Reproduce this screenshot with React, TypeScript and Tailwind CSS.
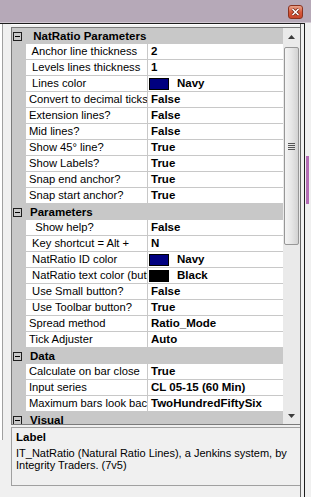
type Row =
  | { kind: "cat"; label: string }
  | { kind: "prop"; name: string; value: string; swatch?: string };

const rows: Row[] = [
  { kind: "cat", label: " NatRatio Parameters" },
  { kind: "prop", name: " Anchor line thickness", value: "2" },
  { kind: "prop", name: " Levels lines thickness", value: "1" },
  { kind: "prop", name: " Lines color", value: "Navy", swatch: "#000080" },
  { kind: "prop", name: "Convert to decimal ticks", value: "False" },
  { kind: "prop", name: "Extension lines?", value: "False" },
  { kind: "prop", name: "Mid lines?", value: "False" },
  { kind: "prop", name: "Show 45° line?", value: "True" },
  { kind: "prop", name: "Show Labels?", value: "True" },
  { kind: "prop", name: "Snap end anchor?", value: "True" },
  { kind: "prop", name: "Snap start anchor?", value: "True" },
  { kind: "cat", label: "Parameters" },
  { kind: "prop", name: "  Show help?", value: "False" },
  { kind: "prop", name: " Key shortcut = Alt +", value: "N" },
  { kind: "prop", name: " NatRatio ID color", value: "Navy", swatch: "#000080" },
  { kind: "prop", name: " NatRatio text color (button)", value: "Black", swatch: "#000000" },
  { kind: "prop", name: " Use Small button?", value: "False" },
  { kind: "prop", name: " Use Toolbar button?", value: "True" },
  { kind: "prop", name: "Spread method", value: "Ratio_Mode" },
  { kind: "prop", name: "Tick Adjuster", value: "Auto" },
  { kind: "cat", label: "Data" },
  { kind: "prop", name: "Calculate on bar close", value: "True" },
  { kind: "prop", name: "Input series", value: "CL 05-15 (60 Min)" },
  { kind: "prop", name: "Maximum bars look back", value: "TwoHundredFiftySix" },
  { kind: "cat", label: "Visual" },
];

export default function App() {
  return (
    <div className="w-[311px] h-[497px] overflow-hidden bg-[#f0f0f0] flex flex-col font-['Liberation_Sans',Arial,sans-serif] text-black">
      {/* title bar */}
      <div className="h-[23px] shrink-0 bg-[#b6a9b8] border-b border-[#d2c9d3] flex justify-end items-start pt-[5px] pr-[8px]">
        <CloseButton />
      </div>

      <div className="flex flex-1 min-h-0">
        <div className="w-[305px] border-t border-r border-[#1c1c1c] flex">
          {/* strip of the window behind */}
          <div className="w-[11px] flex flex-col">
            <div className="h-[416px] flex">
              <div className="w-[2px] bg-white" />
              <div className="w-px bg-[#a0a0a0]" />
              <div className="flex-1 bg-[#f0f0f0]" />
            </div>
          </div>

          <div className="w-[290px] border-r border-[#646464] flex flex-col">
            <div className="h-[3px] border-t border-white" />
            <div className="h-[398px] border-l border-t border-b border-[#7a7a7a] flex">
              <div className="w-[271px] overflow-hidden flex flex-col">
                {rows.map((r, i) =>
                  r.kind === "cat" ? <CategoryRow key={i} label={r.label} /> : <PropRow key={i} {...r} />
                )}
              </div>
              <ScrollBar />
            </div>
            <div className="h-[2px]" />
            <div className="h-[59px] border-l border-t border-b border-[#a0a0a0] pl-[4px] pt-[2px]">
              <p className="text-[11.5px] leading-[14px] font-bold">Label</p>
              <p className="mt-[3px] text-[11px] leading-[12px]">
                IT_NatRatio (Natural Ratio Lines), a Jenkins system, by
                <br />
                Integrity Traders. (7v5)
              </p>
            </div>
          </div>
          <div className="w-[3px]" />
        </div>

        <div className="flex-1 bg-[#f0f0f0] flex">
          <div className="ml-[1px] mt-[133px] w-[3px] h-[48px] bg-[#b46cb6]" />
        </div>
      </div>
    </div>
  );
}

function CategoryRow({ label }: { label: string }) {
  return (
    <div className="h-[16px] shrink-0 bg-[#c8c8c8] flex items-center">
      <div className="w-[18px] pl-px flex items-center">
        <svg width="9" height="9" viewBox="0 0 9 9">
          <rect x="0.5" y="0.5" width="8" height="8" fill="none" stroke="#1e1e1e" />
          <line x1="2" y1="4.5" x2="7" y2="4.5" stroke="#000" />
        </svg>
      </div>
      <span className="whitespace-pre text-[11.5px] leading-[15px] font-bold">{label}</span>
    </div>
  );
}

function PropRow({ name, value, swatch }: { name: string; value: string; swatch?: string }) {
  return (
    <div className="h-[16px] shrink-0 flex">
      <div className="w-[14px] bg-[#c8c8c8]" />
      <div className="w-[121px] bg-white border-b border-[#c8c8c8] pl-[3px] overflow-hidden whitespace-pre text-[11.2px] leading-[15px]">
        {name}
      </div>
      <div className="w-px bg-[#c8c8c8]" />
      {swatch ? (
        <div className="w-[135px] bg-white border-b border-[#c8c8c8] pl-px flex items-start overflow-hidden">
          <div className="mt-[2px] w-[20px] h-[12px] border border-black" style={{ backgroundColor: swatch }} />
          <span className="ml-[8px] text-[11.5px] leading-[15px] font-bold">{value}</span>
        </div>
      ) : (
        <div className="w-[135px] bg-white border-b border-[#c8c8c8] pl-[3px] overflow-hidden whitespace-nowrap text-[11.5px] leading-[15px] font-bold">
          {value}
        </div>
      )}
    </div>
  );
}

function ScrollBar() {
  return (
    <div className="w-[17px] bg-[#eaeaea] flex flex-col">
      <div className="h-[17px] flex items-center justify-center">
        <svg width="7" height="4" viewBox="0 0 7 4">
          <path d="M0 4 L3.5 0 L7 4 Z" fill="#3c3c3c" />
        </svg>
      </div>
      <div className="flex-1">
        <div className="mx-px mt-[2px] h-[198px] rounded-[2px] border border-[#979797] bg-linear-to-r from-[#f4f4f4] via-[#e6e6e6] to-[#d2d2d2] flex items-center justify-center">
          <div className="flex flex-col gap-px">
            <div className="w-[7px] h-px bg-[#555]" />
            <div className="w-[7px] h-px bg-[#555]" />
            <div className="w-[7px] h-px bg-[#555]" />
            <div className="w-[7px] h-px bg-[#555]" />
          </div>
        </div>
      </div>
      <div className="h-[17px] flex items-center justify-center">
        <svg width="7" height="4" viewBox="0 0 7 4">
          <path d="M0 0 L3.5 4 L7 0 Z" fill="#3c3c3c" />
        </svg>
      </div>
    </div>
  );
}

function CloseButton() {
  return (
    <div className="w-[15px] h-[14px] rounded-[3px] border border-[#8a3320] bg-linear-to-b from-[#e8a48c] via-[#d8583a] to-[#c7452a] flex items-center justify-center">
      <svg width="9" height="8" viewBox="0 0 9 8">
        <path d="M1.5 1 L7.5 7 M7.5 1 L1.5 7" stroke="#6a2010" strokeWidth="3" />
        <path d="M1.5 1 L7.5 7 M7.5 1 L1.5 7" stroke="#fff" strokeWidth="1.6" />
      </svg>
    </div>
  );
}
